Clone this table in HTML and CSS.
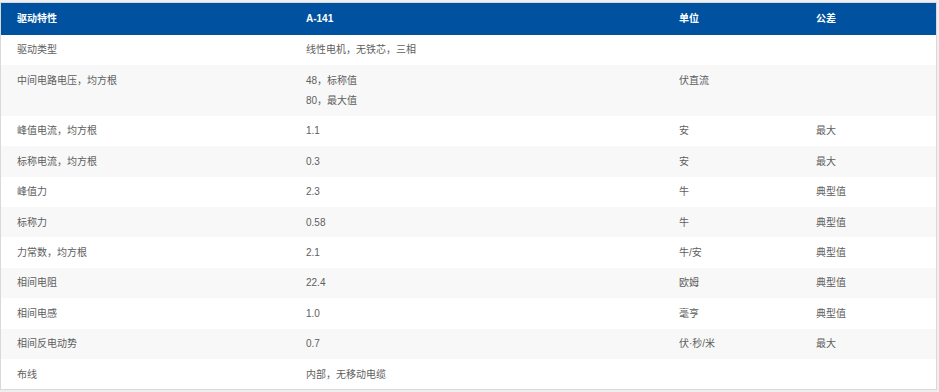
FILE: index.html
```html
<!DOCTYPE html>
<html lang="zh-CN">
<head>
<meta charset="utf-8">
<title>驱动特性</title>
<link rel="stylesheet" href="styles.css">
</head>
<body>
<div class="card">
  <table class="spec">
    <colgroup>
      <col class="c1"><col class="c2"><col class="c3"><col class="c4">
    </colgroup>
    <thead>
      <tr><th>驱动特性</th><th>A-141</th><th>单位</th><th>公差</th></tr>
    </thead>
    <tbody>
      <tr><td>驱动类型</td><td>线性电机，无铁芯，三相</td><td></td><td></td></tr>
      <tr><td>中间电路电压，均方根</td><td><div>48，标称值</div><div>80，最大值</div></td><td>伏直流</td><td></td></tr>
      <tr><td>峰值电流，均方根</td><td>1.1</td><td>安</td><td>最大</td></tr>
      <tr><td>标称电流，均方根</td><td>0.3</td><td>安</td><td>最大</td></tr>
      <tr><td>峰值力</td><td>2.3</td><td>牛</td><td>典型值</td></tr>
      <tr><td>标称力</td><td>0.58</td><td>牛</td><td>典型值</td></tr>
      <tr><td>力常数，均方根</td><td>2.1</td><td>牛/安</td><td>典型值</td></tr>
      <tr><td>相间电阻</td><td>22.4</td><td>欧姆</td><td>典型值</td></tr>
      <tr><td>相间电感</td><td>1.0</td><td>毫亨</td><td>典型值</td></tr>
      <tr><td>相间反电动势</td><td>0.7</td><td>伏·秒/米</td><td>最大</td></tr>
      <tr><td>布线</td><td>内部，无移动电缆</td><td></td><td></td></tr>
    </tbody>
  </table>
</div>
</body>
</html>
```

FILE: styles.css
```css
html, body {
  margin: 0;
  padding: 0;
}
body {
  background: #efefef;
  padding-top: 2px;
  font-family: "Liberation Sans", "Noto Sans CJK SC", sans-serif;
  font-size: 10px;
}
.card {
  width: 937px;
  box-sizing: border-box;
  border: 1px solid #d9d9d9;
  background: #ffffff;
}
.spec {
  width: 100%;
  border-collapse: collapse;
  table-layout: fixed;
}
.c1 { width: 289px; }
.c2 { width: 373px; }
.c3 { width: 137px; }
.c4 { width: auto; }
.spec th {
  background: #0052a0;
  color: #ffffff;
  font-weight: bold;
  text-align: left;
  padding: 6.2px 0 5px 16px;
  line-height: 20.4px;
  height: 20.4px;
}
.spec td {
  color: #5e5e5e;
  text-align: left;
  vertical-align: top;
  padding: 5.6px 0 4.4px 16px;
  line-height: 20.4px;
  height: 20.4px;
}
.spec tbody tr:nth-child(even) td {
  background: #f8f8f8;
}
.spec tbody tr:nth-child(odd) td {
  background: #ffffff;
}
```
